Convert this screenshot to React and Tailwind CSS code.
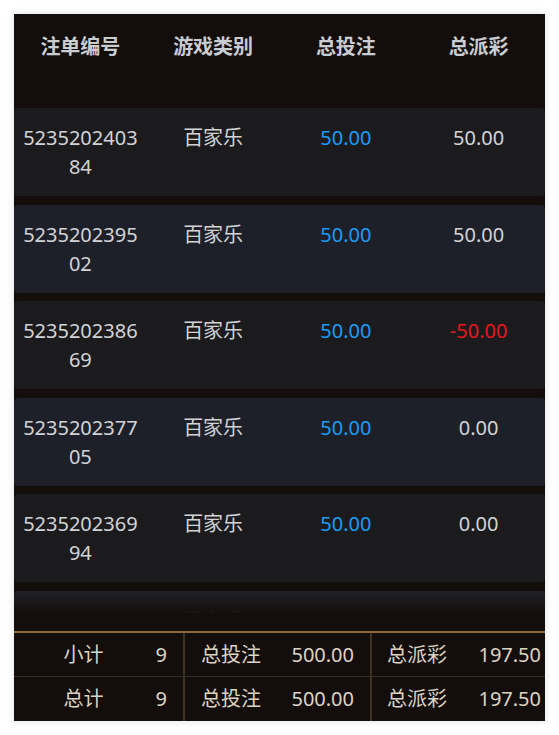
import React from 'react';

const rows = [
  { id: '523520240384', game: '百家乐', bet: '50.00', win: '50.00' },
  { id: '523520239502', game: '百家乐', bet: '50.00', win: '50.00' },
  { id: '523520238669', game: '百家乐', bet: '50.00', win: '-50.00' },
  { id: '523520237705', game: '百家乐', bet: '50.00', win: '0.00' },
  { id: '523520236994', game: '百家乐', bet: '50.00', win: '0.00' },
  { id: '523520235817', game: '百家乐', bet: '50.00', win: '97.50' },
  { id: '523520234426', game: '百家乐', bet: '50.00', win: '0.00' },
];

const font = { fontFamily: '"Noto Sans", "Noto Sans CJK SC", sans-serif' };

const Row = ({ row, index }) => {
  const negative = row.win.startsWith('-');
  return (
    <div
      className={`grid grid-cols-4 shrink-0 h-[88px] rounded-[4px] pt-[15px] text-[20px] leading-[29px] text-[#d2d3d6] ${
        index % 2 === 0 ? 'bg-[#1b1b1e]' : 'bg-[#1e2029]'
      }`}
    >
      <div className="px-[6px] text-center break-all">{row.id}</div>
      <div className="text-center">{row.game}</div>
      <div className="text-center text-[#1a9cf2]">{row.bet}</div>
      <div className={`text-center ${negative ? 'text-[#e8161d]' : ''}`}>{row.win}</div>
    </div>
  );
};

const App = () => {
  return (
    <div className="min-h-screen bg-white pt-[14px]" style={font}>
      <div className="mx-[14px] w-[531px] h-[707px] flex flex-col bg-[#130e0c] shadow-[0_0_8px_rgba(0,0,0,0.12)]">
        {/* table head */}
        <div className="grid grid-cols-4 h-[94px] shrink-0 pt-[18px] text-[20px] leading-[29px] font-bold text-[#c9ccd1]">
          <div className="text-center">注单编号</div>
          <div className="text-center">游戏类别</div>
          <div className="text-center">总投注</div>
          <div className="text-center">总派彩</div>
        </div>

        {/* list */}
        <div className="relative h-[523px] shrink-0 overflow-hidden">
          <div className="flex flex-col gap-[8.6px]">
            {rows.map((row, i) => (
              <Row key={row.id} row={row} index={i} />
            ))}
          </div>
          <div className="absolute left-0 right-0 bottom-0 h-[40px] bg-linear-to-b from-[#130e0c00] to-[#130e0c] to-55%" />
        </div>

        {/* summary */}
        <div className="border-t-2 border-[#8a6a3c] text-[20px] text-[#ddd4c3]">
          {[
            ['小计', '9', '500.00', '197.50'],
            ['总计', '9', '500.00', '197.50'],
          ].map(([label, count, bet, win], i) => (
            <div
              key={label}
              className={`flex h-[44px] items-center ${i === 0 ? 'border-b border-[#3a2e20]' : ''}`}
            >
              <div className="w-[171px] h-full flex items-center justify-end gap-[52px] pr-[16px] border-r-2 border-[#3e3122]">
                <span>{label}</span>
                <span>{count}</span>
              </div>
              <div className="w-[187px] h-full flex items-center justify-between pl-[16px] pr-[16px] border-r-2 border-[#3e3122]">
                <span>总投注</span>
                <span>{bet}</span>
              </div>
              <div className="flex-1 h-full flex items-center justify-between pl-[15px] pr-[4px]">
                <span>总派彩</span>
                <span>{win}</span>
              </div>
            </div>
          ))}
        </div>
      </div>
    </div>
  );
};

export default App;
